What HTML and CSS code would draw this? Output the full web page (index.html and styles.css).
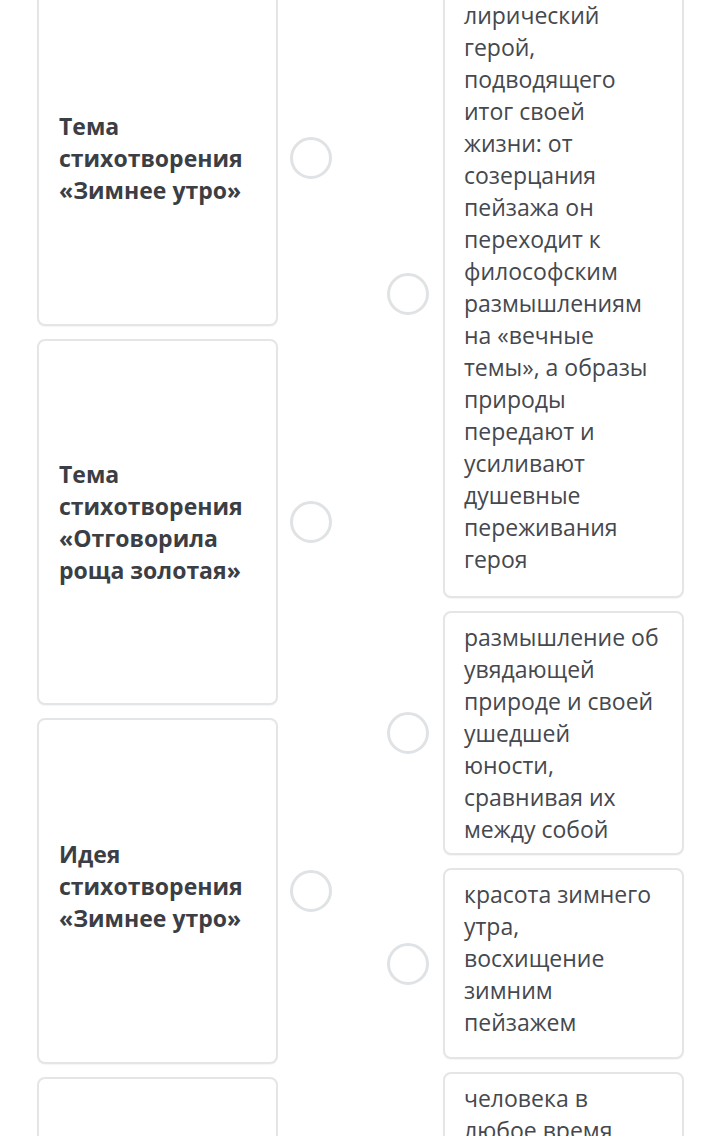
FILE: index.html
```html
<!DOCTYPE html>
<html lang="ru">
<head>
<meta charset="utf-8">
<title>Сопоставление</title>
<link rel="stylesheet" href="styles.css">
</head>
<body>
<main class="match">
  <section class="col col-left">
    <div class="item">
      <div class="card card-bold h-335">Тема стихотворения «Зимнее утро»</div>
      <span class="dot"></span>
    </div>
    <div class="item">
      <div class="card card-bold h-366">Тема стихотворения «Отговорила роща золотая»</div>
      <span class="dot"></span>
    </div>
    <div class="item">
      <div class="card card-bold h-346 shift-up">Идея стихотворения «Зимнее утро»</div>
      <span class="dot"></span>
    </div>
    <div class="item">
      <div class="card card-bold h-320">Идея стихотворения «Отговорила роща золотая»</div>
      <span class="dot"></span>
    </div>
  </section>
  <section class="col col-right">
    <div class="item">
      <span class="dot"></span>
      <div class="card card-text h-609">лирический герой, подводящего итог своей жизни: от созерцания пейзажа он переходит к философским размышлениям на «вечные темы», а образы природы передают и усиливают душевные переживания героя</div>
    </div>
    <div class="item">
      <span class="dot"></span>
      <div class="card card-text h-244">размышление об увядающей природе и своей ушедшей юности, сравнивая их между собой</div>
    </div>
    <div class="item">
      <span class="dot"></span>
      <div class="card card-text h-191">красота зимнего утра, восхищение зимним пейзажем</div>
    </div>
    <div class="item">
      <span class="dot"></span>
      <div class="card card-text h-220">человека в любое время года радует природа</div>
    </div>
  </section>
</main>
</body>
</html>
```

FILE: styles.css
```css
html, body {
  margin: 0;
  padding: 0;
  background: #ffffff;
  height: 1136px;
  overflow: hidden;
}

.match {
  display: flex;
  align-items: flex-start;
  padding-left: 37px;
  gap: 55px;
  font-family: "Open Sans", "Noto Sans", sans-serif;
  font-size: 23px;
  line-height: 32px;
  color: #45484e;
}

.col {
  display: flex;
  flex-direction: column;
  gap: 13px;
}

.col-left { margin-top: -10px; }
.col-right { margin-top: -11px; }

.item {
  display: flex;
  align-items: center;
}

.col-left .item { gap: 12px; }
.col-right .item { gap: 14px; }

.card {
  box-sizing: border-box;
  width: 241px;
  border: 2px solid #e3e5e7;
  border-radius: 8px;
  padding: 8px 19px 9px 20px;
  background: #fff;
  box-shadow: 0 1px 1px rgba(0, 0, 0, 0.04);
}

.card-bold {
  display: flex;
  align-items: center;
  font-weight: 700;
  color: #3b3e44;
}

.card-text {
  font-weight: 400;
  padding-left: 19px;
}

.shift-up { padding-bottom: 19px; }

.h-335 { height: 336px; }
.h-366 { height: 366px; }
.h-346 { height: 346px; }
.h-320 { height: 320px; }
.h-609 { height: 609px; }
.h-244 { height: 244px; }
.h-191 { height: 191px; }
.h-220 { height: 220px; }

.dot {
  flex: none;
  box-sizing: border-box;
  width: 42px;
  height: 42px;
  border: 3px solid #dfe3e6;
  border-radius: 50%;
}
```
